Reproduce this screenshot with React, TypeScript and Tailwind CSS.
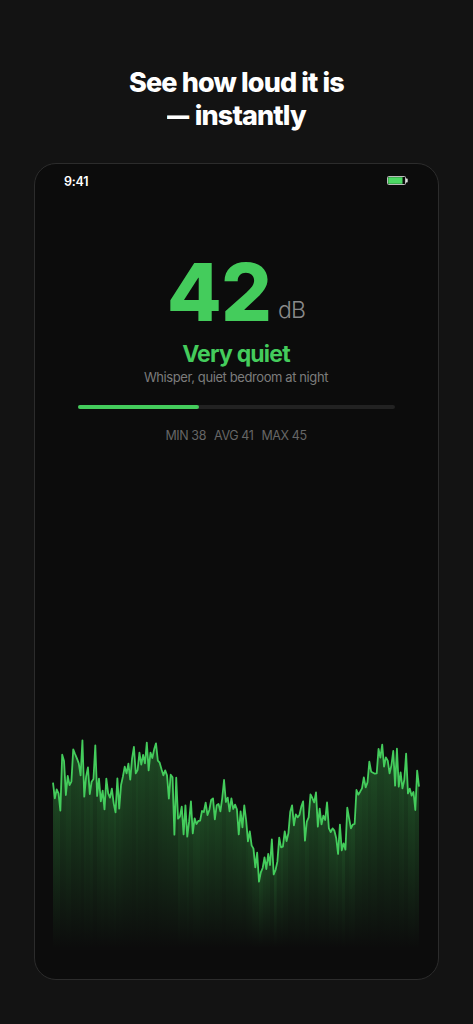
const CHART_WIDTH = 366
const CHART_HEIGHT = 218

// Distance from the top of the chart, in thirds of a pixel
const samples = [
	158, 205, 178, 190, 242, 74, 93, 195, 138, 165, 155, 58, 72, 85, 100, 136, 31, 200, 140, 112,
	192, 155, 147, 46, 198, 146, 214, 182, 238, 146, 190, 203, 176, 220, 247, 145, 236, 165, 140, 110,
	130, 101, 149, 85, 51, 130, 120, 68, 104, 75, 100, 38, 121, 68, 84, 58, 40, 92, 98, 118,
	136, 121, 136, 206, 134, 142, 314, 143, 266, 260, 230, 313, 226, 320, 275, 214, 310, 265, 282, 273,
	272, 243, 246, 218, 255, 240, 210, 205, 268, 226, 222, 244, 205, 150, 216, 203, 244, 205, 237, 224,
	238, 313, 244, 292, 226, 270, 334, 304, 346, 356, 412, 368, 455, 427, 414, 382, 417, 372, 405, 328,
	433, 420, 395, 323, 352, 350, 304, 333, 310, 245, 226, 286, 253, 262, 255, 230, 214, 332, 275, 262,
	193, 204, 217, 187, 290, 236, 283, 257, 270, 217, 295, 306, 295, 302, 325, 372, 284, 361, 340, 359,
	233, 265, 295, 284, 282, 180, 194, 185, 175, 142, 172, 157, 95, 125, 128, 131, 130, 57, 83, 44,
	110, 82, 92, 130, 106, 63, 167, 56, 170, 127, 175, 150, 71, 190, 176, 197, 186, 240, 122, 170
]

const points = samples.map((value, i) => ({
	x: (i * CHART_WIDTH) / (samples.length - 1),
	y: value / 3
}))

const stats = ['MIN 38', 'AVG 41', 'MAX 45']

function Battery() {
	return (
		<svg width="21" height="9" viewBox="0 0 21 9" fill="none">
			<rect x="0.5" y="0.5" width="18" height="8" rx="1" stroke="#bcbcbc" />
			<rect x="1.2" y="1.2" width="14.3" height="6.6" fill="#4cd964" />
			<path d="M19 2.5h1a.7.7 0 0 1 .7.7v2.6a.7.7 0 0 1-.7.7h-1z" fill="#e0e0e0" />
		</svg>
	)
}

function NoiseChart() {
	return (
		<svg
			className="block overflow-visible"
			width={CHART_WIDTH}
			height={CHART_HEIGHT}
			viewBox={`0 0 ${CHART_WIDTH} ${CHART_HEIGHT}`}
			fill="none">
			<defs>
				<linearGradient id="fade" x1="0" y1="0" x2="0" y2="1">
					<stop offset="0" stopColor="#44cc56" stopOpacity="0.32" />
					<stop offset="1" stopColor="#44cc56" stopOpacity="0" />
				</linearGradient>
			</defs>
			{/* One slice per segment, each fading from its own height */}
			{points.slice(1).map((point, i) => (
				<polygon
					key={i}
					points={`${points[i].x},${points[i].y} ${point.x},${point.y} ${point.x},${CHART_HEIGHT} ${points[i].x},${CHART_HEIGHT}`}
					fill="url(#fade)"
					shapeRendering="crispEdges"
				/>
			))}
			<polyline
				points={points.map(({ x, y }) => `${x},${y}`).join(' ')}
				stroke="#44cc5c"
				strokeWidth="1.8"
				strokeLinejoin="round"
			/>
		</svg>
	)
}

export default function App() {
	return (
		<div className="flex h-[1024px] w-[473px] flex-col items-center bg-[#131313] pt-[66px] font-['Inter',sans-serif]">
			<h1 className="h-[97px] text-center text-[27px] leading-[33px] font-extrabold tracking-[-0.87px] text-white">
				See how loud it is
				<br />
				<span className="inline-block w-[22.5px] origin-left scale-x-[0.82]">—</span> instantly
			</h1>
			<div className="flex h-[817px] w-[405px] shrink-0 flex-col items-center rounded-[22px] border border-[#2c2c2c] bg-[#0c0c0c]">
				{/* Status bar */}
				<div className="flex w-full items-start justify-between pt-[9px] pr-[30px] pl-[29px]">
					<span className="text-[12.5px] leading-[18px] font-semibold tracking-[-0.2px] text-white">
						9:41
					</span>
					<div className="pt-[3px]">
						<Battery />
					</div>
				</div>
				{/* Reading */}
				<div className="mt-[57px] mr-px flex items-baseline gap-[7px] leading-[88px]">
					<span className="text-[80px] font-extrabold tracking-[-1px] text-[#44cc5c]">42</span>
					<span className="-translate-y-[3px] text-[23px] font-light tracking-[-0.8px] text-[#8a8a8a]">
						dB
					</span>
				</div>
				<div className="-mt-[17px] mr-px text-[23px] leading-7 font-bold tracking-[-0.8px] text-[#44cc5c]">
					Very quiet
				</div>
				<div className="mt-px mr-px text-[13px] leading-4 tracking-[-0.4px] text-[#7c7c7c]">
					Whisper, quiet bedroom at night
				</div>
				<div className="mt-5 h-[4px] w-[317px] rounded-full bg-[#222]">
					<div className="h-full w-[121px] rounded-full bg-[#44cc5c]"></div>
				</div>
				<div className="mt-[19px] mr-px flex gap-2 text-[12.5px] leading-4 tracking-[-0.4px] text-[#666]">
					{stats.map(stat => (
						<span key={stat}>{stat}</span>
					))}
				</div>
				{/* History */}
				<div className="mt-auto mr-[2px] mb-[31px]">
					<NoiseChart />
				</div>
			</div>
		</div>
	)
}
